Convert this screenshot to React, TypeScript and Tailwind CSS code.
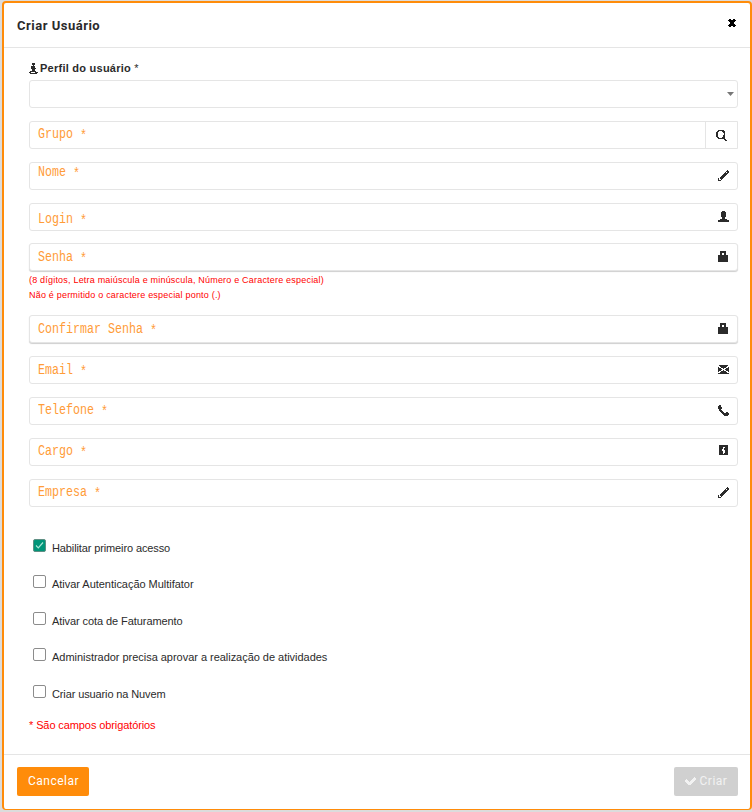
import React from "react";

type Bitmap = string[];

const ICONS: Record<string, Bitmap> = {
  pencil: [
    ".........#.",
    "........###",
    ".......#.##",
    "......####.",
    ".....####..",
    "....####...",
    "...####....",
    "..####.....",
    "#.###......",
    "#..#.......",
    "###........",
  ],
  user: [
    "....###....",
    "...#####...",
    "...#####...",
    "...#####...",
    "...#####...",
    "...#####...",
    "....###....",
    "....###....",
    "..#######..",
    "###########",
    "###########",
  ],
  lock: [
    "..######..",
    "..######..",
    "..##..##..",
    "..##..##..",
    "##########",
    "##########",
    "##########",
    "##########",
    "##########",
    "##########",
    "##########",
  ],
  mail: [
    ".#########.",
    "..#######..",
    "#..#####..#",
    "###..#..###",
    "####...####",
    "###..#..###",
    "#..#####..#",
    "..#######..",
    "###########",
  ],
  phone: [
    ".##........",
    "###........",
    "####.......",
    "####.......",
    ".##........",
    ".###.......",
    "..###......",
    "...###..##.",
    "....#######",
    ".....######",
    "......####.",
  ],
  info: [
    "#########",
    "#########",
    "####..###",
    "####.####",
    "###..####",
    "###...###",
    "####..###",
    "####..###",
    "####.####",
    "#########",
  ],
  search: [
    "..######...",
    ".##...###..",
    "##.....##..",
    "##......#..",
    "##......#..",
    "##.....##..",
    "##.....##..",
    ".##...###..",
    "..#######..",
    "........##.",
    ".........##",
  ],
  close: [
    ".##..##.",
    "########",
    ".######.",
    "..####..",
    "..####..",
    ".######.",
    "########",
    ".##..##.",
  ],
  pawn: [
    "...###...",
    "...###...",
    "....#....",
    "..####...",
    "..####...",
    "..#####..",
    "...###...",
    "...###...",
    ".######..",
    "##....###",
    ".#######.",
  ],
  check: [
    ".........#.",
    "........###",
    ".#.....####",
    "###...####.",
    "####.####..",
    ".#######...",
    "..#####....",
    "...###.....",
  ],
};

function Icon({ name, className = "" }: { name: string; className?: string }) {
  const rows = ICONS[name];
  return (
    <svg
      width={rows[0].length}
      height={rows.length}
      viewBox={`0 0 ${rows[0].length} ${rows.length}`}
      shapeRendering="crispEdges"
      fill="currentColor"
      className={`shrink-0 ${className}`}
    >
      {rows.flatMap((row, y) =>
        [...row].map((c, x) => (c === "#" ? <rect key={`${x}-${y}`} x={x} y={y} width="1" height="1" /> : null)),
      )}
    </svg>
  );
}

function Placeholder({ label, className }: { label: string; className: string }) {
  return (
    <span
      className={`origin-left scale-x-[0.8333] font-['Liberation_Mono',monospace] text-[14px] leading-[14px] whitespace-pre text-[#ff9c38] ${className}`}
    >
      {label} <span className="inline-block translate-y-[2px]">*</span>
    </span>
  );
}

interface FieldProps {
  label: string;
  icon: string;
  box?: string;
  text: string;
  iconClass: string;
}

function Field({ label, icon, box = "", text, iconClass }: FieldProps) {
  return (
    <div
      className={`flex h-7 shrink-0 items-start justify-between rounded-[3px] border border-[#e5e5e5] bg-white pl-2 ${box}`}
    >
      <Placeholder label={label} className={text} />
      <Icon name={icon} className={iconClass} />
    </div>
  );
}

function Option({ label, checked = false, className = "" }: { label: string; checked?: boolean; className?: string }) {
  return (
    <div className="flex h-[36.5px] items-start">
      <span
        className={`flex size-[13px] shrink-0 items-center justify-center rounded-[2px] border ${
          checked ? "border-[#5f8f84] bg-[#009478]" : "border-[#8c8c8c] bg-white"
        }`}
      >
        {checked && (
          <svg width="9" height="9" viewBox="0 0 9 9" fill="none" stroke="#a8e6d6" strokeWidth="1.2">
            <path d="M1 4.5 3.3 6.8 8 1.5" />
          </svg>
        )}
      </span>
      <span className={`ml-1.5 pt-[2px] text-[11px] leading-[14px] whitespace-nowrap ${className}`}>{label}</span>
    </div>
  );
}

export default function App() {
  return (
    <div className="h-[812px] w-[752px] bg-[#dcdcdc] pt-px pl-0.5 font-['Liberation_Sans',Arial,sans-serif] text-[#2b2b2b]">
      <div className="flex h-[809px] w-[750px] flex-col rounded-[4px] border-2 border-b border-[#ff8c0a] bg-white">
        <header className="flex h-[45px] shrink-0 items-start justify-between border-b border-[#e5e5e5] pr-3.5 pl-[13px]">
          <h1 className="pt-[15px] font-[Roboto,sans-serif] text-[13px] leading-4 font-bold tracking-[0.5px]">Criar Usuário</h1>
          <Icon name="close" className="mt-4 text-black" />
        </header>

        <main className="flex h-[706px] shrink-0 flex-col pr-3 pl-[25px]">
          <div className="flex h-8 shrink-0 items-start">
            <Icon name="pawn" className="mt-[15px]" />
            <span className="mt-[13px] ml-0.5 text-[11px] leading-[14px] font-bold tracking-[0.25px]">
              Perfil do usuário <span className="font-normal">*</span>
            </span>
          </div>
          <div className="flex h-7 shrink-0 items-center justify-end rounded-[3px] border border-[#e5e5e5] pr-[3px]">
            <svg width="7" height="4" viewBox="0 0 7 4" fill="#777">
              <path d="M0 0h7L3.5 4z" />
            </svg>
          </div>

          <div className="mt-[13px] flex h-7 shrink-0 items-start justify-between rounded-l-[3px] border border-[#e5e5e5] pl-2">
            <Placeholder label="Grupo" className="mt-[5px]" />
            <span className="flex h-full w-8 border-l border-[#e5e5e5] pt-2 pl-2.5">
              <Icon name="search" />
            </span>
          </div>

          <Field label="Nome" icon="pencil" box="mt-[13px]" text="mt-[2px]" iconClass="mt-[7px] mr-2" />
          <Field label="Login" icon="user" box="mt-[13px]" text="mt-[8px]" iconClass="mt-[7px] mr-2" />
          <Field
            label="Senha"
            icon="lock"
            box="mt-[12px] shadow-[0_1px_1px_0_#cfcfcf]"
            text="mt-[6px]"
            iconClass="mt-[7px] mr-[9px]"
          />
          <div className="mt-[2px] h-[30px] shrink-0 text-[9px] leading-[15px] tracking-[0.2px] text-[#f00]">
            <p>(8 dígitos, Letra maiúscula e minúscula, Número e Caractere especial)</p>
            <p>Não é permitido o caractere especial ponto (.)</p>
          </div>
          <Field
            label="Confirmar Senha"
            icon="lock"
            box="mt-[12px] shadow-[0_1px_1px_0_#cfcfcf]"
            text="mt-[6px]"
            iconClass="mt-[7px] mr-[9px]"
          />
          <Field label="Email" icon="mail" box="mt-[13px]" text="mt-[6px]" iconClass="mt-[8px] mr-2" />
          <Field label="Telefone" icon="phone" box="mt-[13px]" text="mt-[5px]" iconClass="mt-[7px] mr-2" />
          <Field label="Cargo" icon="info" box="mt-[13px]" text="mt-[5px]" iconClass="mt-[6px] mr-[9px]" />
          <Field label="Empresa" icon="pencil" box="mt-[13px]" text="mt-[5px]" iconClass="mt-[7px] mr-2" />

          <div className="mt-[31.5px] shrink-0 pl-1">
            <Option label="Habilitar primeiro acesso" checked className="tracking-[-0.12px]" />
            <Option label="Ativar Autenticação Multifator" className="tracking-[-0.03px]" />
            <Option label="Ativar cota de Faturamento" className="tracking-[-0.08px]" />
            <Option label="Administrador precisa aprovar a realização de atividades" className="tracking-[-0.03px]" />
            <Option label="Criar usuario na Nuvem" className="tracking-[-0.12px]" />
          </div>
          <p className="mt-[-3.5px] text-[11px] leading-[14px] tracking-[-0.1px] text-[#f00]">* São campos obrigatórios</p>
        </main>

        <footer className="flex flex-1 items-start justify-between border-t border-[#e5e5e5] pt-3 pr-3 pl-[13px] font-[Roboto,sans-serif] text-[12px]">
          <button className="h-[29px] w-[72px] rounded-[2px] bg-[#ff8c0a] pb-0.5 pl-px tracking-[0.5px] text-white">
            Cancelar
          </button>
          <button className="flex h-[29px] w-16 items-center justify-center gap-1 rounded-[2px] bg-[#d0d0d0] pb-0.5 tracking-[0.5px] text-[#f2f2f2]">
            <Icon name="check" />
            Criar
          </button>
        </footer>
      </div>
    </div>
  );
}
